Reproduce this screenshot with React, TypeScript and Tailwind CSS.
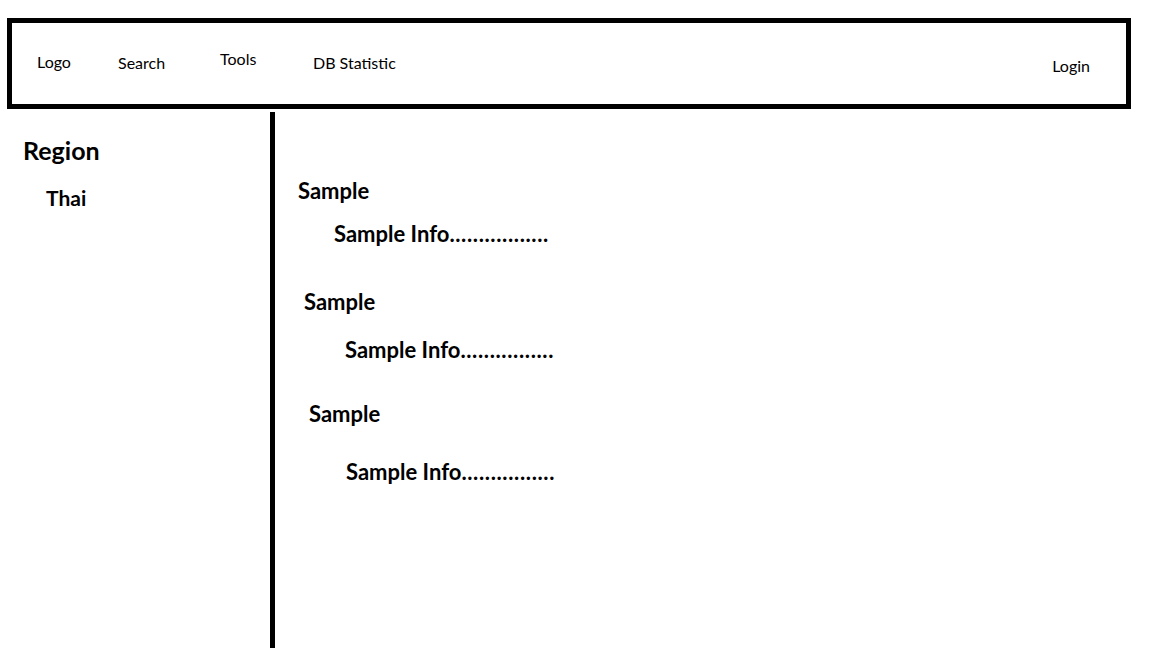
export default function App() {
  const samples = [
    { titleMl: 'ml-[23px]', titleMt: 'mt-[68px]', infoMl: 'ml-[59px]', infoMt: 'mt-[21px]', dots: 17 },
    { titleMl: 'ml-[29px]', titleMt: 'mt-[46px]', infoMl: 'ml-[70px]', infoMt: 'mt-[26px]', dots: 16 },
    { titleMl: 'ml-[34px]', titleMt: 'mt-[42px]', infoMl: 'ml-[71px]', infoMt: 'mt-[36px]', dots: 16 },
  ]

  return (
    <div className="w-[1152px] h-[648px] bg-white text-black overflow-hidden font-['Lato',sans-serif]">
      {/* Top bar */}
      <div className="ml-[7px] mt-[18px] w-[1124px] h-[91px] border-[5px] border-black flex items-start text-[16px] leading-none">
        <span className="ml-[25px] mt-[31px] w-[81px]">Logo</span>
        <span className="mt-[32px] w-[102px]">Search</span>
        <span className="mt-[28px] w-[93px]">Tools</span>
        <span className="mt-[32px]">DB Statistic</span>
        <span className="ml-auto mr-[36px] mt-[35px]">Login</span>
      </div>

      <div className="flex h-[540px] mt-[3px]">
        {/* Left: region */}
        <div className="w-[270px] shrink-0 font-bold">
          <div className="ml-[23px] mt-[26px] text-[25px] leading-none">Region</div>
          <div className="ml-[46px] mt-[24px] text-[21px] leading-none">Thai</div>
        </div>

        {/* Divider */}
        <div className="w-[5px] bg-black shrink-0" />

        {/* Right: samples */}
        <div className="flex-1 flex flex-col items-start font-bold text-[22px] leading-none">
          {samples.map((s, i) => (
            <div key={i} className="flex flex-col items-start">
              <span className={`${s.titleMl} ${s.titleMt}`}>Sample</span>
              <span className={`${s.infoMl} ${s.infoMt}`}>
                Sample Info<span className="tracking-[0.63px]">{'.'.repeat(s.dots)}</span>
              </span>
            </div>
          ))}
        </div>
      </div>
    </div>
  )
}
